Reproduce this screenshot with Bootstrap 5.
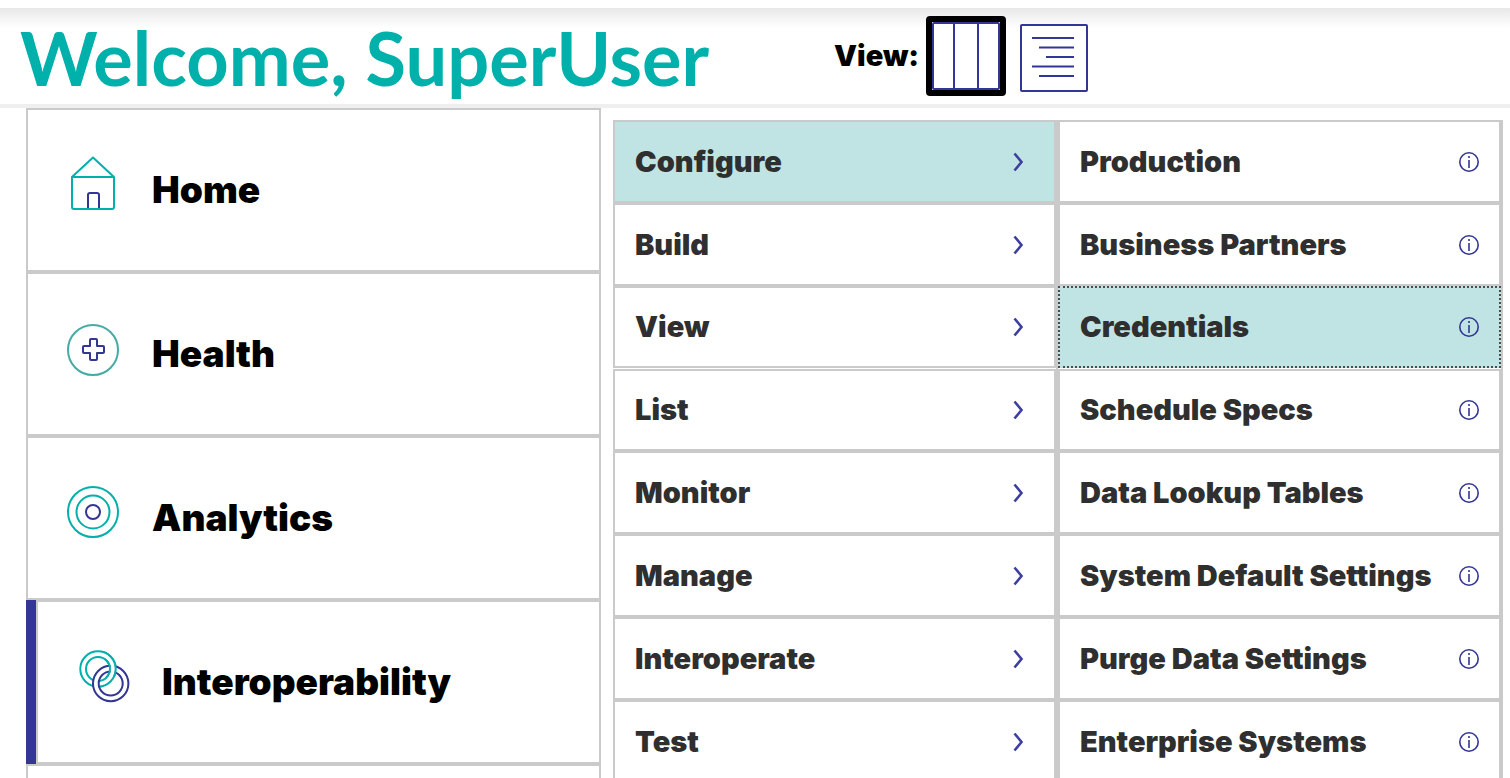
<!DOCTYPE html>
<html lang="en">
<head>
<meta charset="utf-8">
<meta name="viewport" content="width=device-width, initial-scale=1">
<title>Management Portal</title>
<link href="https://cdn.jsdelivr.net/npm/bootstrap@5.3.0/dist/css/bootstrap.min.css" rel="stylesheet">
<style>
:root { --teal: #00b0ab; --indigo: #333695; --line: #cacaca; --pale: #c0e4e4; }
body { font-family: Inter, "Open Sans", sans-serif; color: #000; background: #fff; }
a { color: inherit; text-decoration: none; }
svg { display: block; fill: none; stroke-width: 2; flex: none; }
.teal { stroke: var(--teal); }
.indigo { stroke: var(--indigo); }
.topbar { margin-top: 8px; height: 100px; padding-left: 20px; border-bottom: 4px solid #efefef; background: linear-gradient(#e8e8e8, #fff 20px); }
.welcome { flex: 0 0 814px; padding-top: 4px; font-family: Lato, sans-serif; font-size: 74px; line-height: 92px; font-weight: 700; color: var(--teal); }
.view-label { font-size: 29px; font-weight: 900; width: 92px; }
.view-btn { padding: 0; border: 6px solid transparent; border-radius: 4px; background: transparent; }
.view-btn.chosen { border-color: #000; background: #fff; }
.panes { display: grid; grid-template-columns: 575fr 890fr; column-gap: 12px; padding: 0 7px 0 26px; }
.areas a { display: flex; align-items: center; height: 164px; padding-left: 38px; gap: 32px; border: 2px solid var(--line); font-size: 37px; font-weight: 900; }
.areas svg { margin-bottom: 12px; }
.areas li:has(.current) { border-left: 10px solid var(--indigo); }
.menus { display: grid; grid-template-columns: 1fr 1fr; margin-top: 12px; }
.menu { display: grid; grid-template-rows: repeat(3, 83px) 82px repeat(4, 83px); border-right: 2px solid var(--line); }
.menu a { display: flex; align-items: center; justify-content: space-between; height: 100%; padding: 0 19px 0 20px; border: 2px solid var(--line); color: #2f2f2f; font-size: 29px; font-weight: 900; white-space: nowrap; }
.menu li:nth-child(3) a { height: 82px; }
.menu .open { background: var(--pale); }
.menu .focused { background: var(--pale); border: 2px dotted #4c4c4c; }
.chev { margin-right: 10px; }
</style>
</head>
<body>
<svg width="0" height="0" class="position-absolute" aria-hidden="true">
  <symbol id="chev" viewBox="0 0 12 22"><path d="M1.500 2.500l7 8.500-7 8.500" stroke="#3d3f9f" stroke-width="2.600"/></symbol>
  <symbol id="info" viewBox="0 0 22 22"><circle cx="11" cy="11" r="9.200" stroke="#333695" stroke-width="1.600"/><path d="M11 9v8M11 5v2" stroke="#333695" stroke-width="1.600"/></symbol>
  <clipPath id="over"><rect x="28" y="0" width="26" height="28"/></clipPath>
  <g id="ring"><circle cx="22" cy="20" r="15" stroke="#fff" stroke-width="4"/><circle cx="22" cy="20" r="17.700"/><circle cx="22" cy="20" r="12"/></g>
</svg>
<div class="vh-100 overflow-hidden d-flex flex-column">
  <header class="topbar d-flex align-items-center flex-shrink-0">
    <h1 class="welcome m-0 text-nowrap">Welcome, SuperUser</h1>
    <span class="view-label">View:</span>
    <div class="d-flex align-items-center gap-2">
      <button class="view-btn chosen" type="button" aria-label="Columns" aria-pressed="true">
        <svg width="68" height="68" viewBox="0 0 68 68" class="indigo"><rect x="1" y="1" width="66" height="66" rx="1"/><path d="M22 1v66M46 1v66"/></svg>
      </button>
      <button class="view-btn" type="button" aria-label="List" aria-pressed="false">
        <svg width="68" height="72" viewBox="0 -4 68 72" class="indigo"><rect x="1" y="1" width="66" height="66" rx="1" fill="#fff"/><path d="M12 14h42M19 23.500h35M26 33h28M12 42.500h42M19 52h35"/></svg>
      </button>
    </div>
  </header>
  <main class="panes">
    <nav aria-label="Areas">
      <ul class="areas list-unstyled m-0">
        <li><a href="#"><svg width="54" height="56" viewBox="0 0 54 56" class="teal"><path d="M6 21 27 1.500 48 21V51q0 2-2 2H8q-2 0-2-2ZM6 21h42" stroke-linejoin="round"/><path class="indigo" d="M22 52V39q0-2 2-2h7q2 0 2 2v13"/></svg>Home</a></li>
        <li><a href="#"><svg width="54" height="58" viewBox="0 -4 54 58"><circle cx="27" cy="27" r="25" stroke="#45aba5"/><path class="indigo" stroke-linejoin="round" d="M24 17q0-1 1-1h5q1 0 1 1v6h6q1 0 1 1v5q0 1-1 1h-6v6q0 1-1 1h-5q-1 0-1-1v-6h-6q-1 0-1-1v-5q0-1 1-1h6Z"/></svg>Health</a></li>
        <li><a href="#"><svg width="54" height="54" viewBox="0 0 54 54" class="teal"><circle cx="27" cy="27" r="25"/><circle cx="27" cy="27" r="16.500"/><circle class="indigo" cx="27" cy="27" r="7"/></svg>Analytics</a></li>
        <li><a href="#" class="current"><svg width="54" height="54" viewBox="0 0 54 54"><use href="#ring" class="teal"/><use href="#ring" x="12.700" y="14.500" class="indigo"/><g clip-path="url(#over)"><use href="#ring" class="teal"/></g></svg>Interoperability</a></li>
        <li><a href="#" aria-label="More"></a></li>
      </ul>
    </nav>
    <div class="menus">
      <ul class="menu list-unstyled m-0">
        <li><a href="#" class="open">Configure<svg class="chev" width="12" height="22"><use href="#chev"/></svg></a></li>
        <li><a href="#">Build<svg class="chev" width="12" height="22"><use href="#chev"/></svg></a></li>
        <li><a href="#">View<svg class="chev" width="12" height="22"><use href="#chev"/></svg></a></li>
        <li><a href="#">List<svg class="chev" width="12" height="22"><use href="#chev"/></svg></a></li>
        <li><a href="#">Monitor<svg class="chev" width="12" height="22"><use href="#chev"/></svg></a></li>
        <li><a href="#">Manage<svg class="chev" width="12" height="22"><use href="#chev"/></svg></a></li>
        <li><a href="#">Interoperate<svg class="chev" width="12" height="22"><use href="#chev"/></svg></a></li>
        <li><a href="#">Test<svg class="chev" width="12" height="22"><use href="#chev"/></svg></a></li>
      </ul>
      <ul class="menu list-unstyled m-0">
        <li><a href="#">Production<svg width="22" height="22"><use href="#info"/></svg></a></li>
        <li><a href="#">Business Partners<svg width="22" height="22"><use href="#info"/></svg></a></li>
        <li><a href="#" class="focused">Credentials<svg width="22" height="22"><use href="#info"/></svg></a></li>
        <li><a href="#">Schedule Specs<svg width="22" height="22"><use href="#info"/></svg></a></li>
        <li><a href="#">Data Lookup Tables<svg width="22" height="22"><use href="#info"/></svg></a></li>
        <li><a href="#">System Default Settings<svg width="22" height="22"><use href="#info"/></svg></a></li>
        <li><a href="#">Purge Data Settings<svg width="22" height="22"><use href="#info"/></svg></a></li>
        <li><a href="#">Enterprise Systems<svg width="22" height="22"><use href="#info"/></svg></a></li>
      </ul>
    </div>
  </main>
</div>
<script src="https://cdn.jsdelivr.net/npm/bootstrap@5.3.0/dist/js/bootstrap.bundle.min.js"></script>
</body>
</html>
